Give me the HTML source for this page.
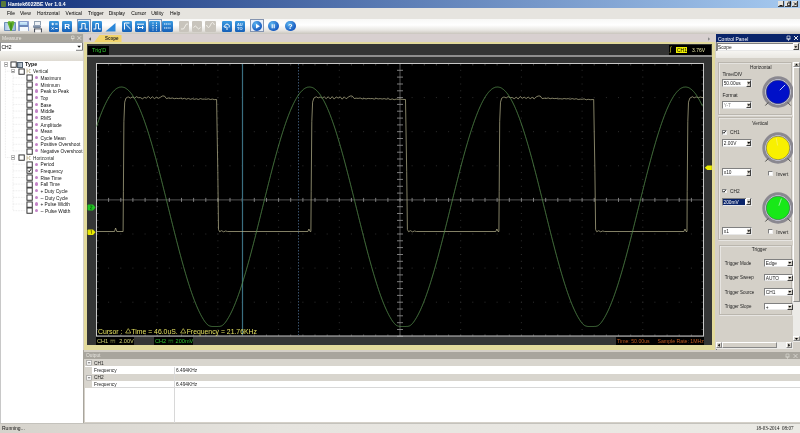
<!DOCTYPE html>
<html><head><meta charset="utf-8">
<style>
*{box-sizing:border-box;margin:0;padding:0}
html,body{width:800px;height:433px;overflow:hidden;background:#d4d0c8;font-family:"Liberation Sans",sans-serif;}
.a{position:absolute}
.t{position:absolute;white-space:nowrap;font-size:5px;line-height:6px;color:#000}
</style></head><body>
<div class="a" style="left:0;top:0;width:800px;height:433px;overflow:hidden;will-change:transform;filter:blur(0.3px)">

<!-- TITLE BAR -->
<div class="a" style="left:0;top:0;width:800px;height:8px;background:linear-gradient(to right,#12307a 0%,#a6caf0 100%)"></div>
<div class="a" style="left:1px;top:1px;width:5px;height:6px;background:#5a7a3a;border-radius:1px"></div>
<div class="t" style="left:8px;top:1px;font-size:5.1px;line-height:6px;font-weight:bold;color:#fff">Hantek6022BE Ver 1.0.4</div>
<div class="a" style="left:778px;top:1px;width:6px;height:6.2px;background:#e4e2dc;border-right:0.6px solid #404040;border-bottom:0.6px solid #404040"></div>
<div class="a" style="left:785px;top:1px;width:6px;height:6.2px;background:#e4e2dc;border-right:0.6px solid #404040;border-bottom:0.6px solid #404040"></div>
<div class="a" style="left:792px;top:1px;width:6px;height:6.2px;background:#e4e2dc;border-right:0.6px solid #404040;border-bottom:0.6px solid #404040"></div>
<svg class="a" style="left:777px;top:0" width="23" height="8" viewBox="0 0 23 8"><path d="M2.5,5.5h3" stroke="#000" stroke-width="0.9"/><path d="M10.5,3h2.5v2.5h-2.5zM11.2,2h2.5v2.5" stroke="#000" stroke-width="0.7" fill="none"/><path d="M17,2.5l3,3M20,2.5l-3,3" stroke="#000" stroke-width="0.9"/></svg>

<!-- MENU BAR -->
<div class="a" style="left:0;top:8px;width:800px;height:11px;background:#e6e4df"></div>
<div class="t" style="left:7px;top:10px">File</div>
<div class="t" style="left:20px;top:10px">View</div>
<div class="t" style="left:37px;top:10px">Horizontal</div>
<div class="t" style="left:65.6px;top:10px">Vertical</div>
<div class="t" style="left:88px;top:10px">Trigger</div>
<div class="t" style="left:108.7px;top:10px">Display</div>
<div class="t" style="left:131.2px;top:10px">Cursor</div>
<div class="t" style="left:151.2px;top:10px">Utility</div>
<div class="t" style="left:170px;top:10px">Help</div>

<!-- TOOLBAR -->
<div class="a" style="left:0;top:19px;width:800px;height:14.5px;background:linear-gradient(to bottom,#f8f8f6 0%,#ffffff 40%,#e8e6e2 75%,#c9c5bd 100%)"></div>
<div class="a" style="left:4.1px;top:21.7px;width:12px;height:9.2px;background:linear-gradient(to right,#a8c4e4,#d8e8f8 50%,#90b0d8);border:0.5px solid #7090b8;border-radius:0.8px"></div>
<svg class="a" style="left:4.8px;top:20px" width="12" height="12" viewBox="0 0 12 12"><path d="M3.8,1 L6,1.5 L8.2,1 L9.6,2.5 L6.6,11 L5.4,11 L2.4,2.5 Z" fill="#62b02a"/><path d="M5.2,3 L6,10 L6.8,3" stroke="#2e7a10" stroke-width="0.6" fill="none"/></svg>
<div class="a" style="left:18.3px;top:21.3px;width:10.5px;height:10px;background:#8aa0d0;border-radius:0.8px"></div>
<div class="a" style="left:19.5px;top:22px;width:7.5px;height:3.2px;background:linear-gradient(to bottom,#d8f0fc,#a8d0f0)"></div>
<div class="a" style="left:19.2px;top:25.3px;width:8.8px;height:1.8px;background:#6a86b8"></div>
<div class="a" style="left:19.8px;top:27.4px;width:7.8px;height:3.3px;background:#f4f8fc"></div>
<div class="a" style="left:33.8px;top:21.3px;width:6.8px;height:3.6px;background:#eef2f6;border:0.6px solid #90a0b0;border-bottom:none"></div>
<div class="a" style="left:33px;top:24.6px;width:8.4px;height:3.6px;background:linear-gradient(to bottom,#9aaac0,#6a7a90);border-radius:1.2px"></div>
<svg class="a" style="left:32.5px;top:27.5px" width="10" height="5" viewBox="0 0 10 5"><path d="M1.6,0.5 V4.3 M8.4,0.5 V4.3 M1.6,1h6.8" stroke="#283040" stroke-width="0.9" fill="none"/><rect x="2.3" y="1.6" width="5.4" height="2.6" fill="#f8f8f8"/></svg>
<div class="a" style="left:48.8px;top:21px;width:10.2px;height:10.5px;border-radius:1.2px;background:linear-gradient(to bottom,#3a9ae0,#1660b8)"></div>
<svg class="a" style="left:48.8px;top:21px" width="10.2" height="10.5" viewBox="0 0 10.2 10.5"><path d="M2.5,3h2.5M3.75,1.8v2.5M6.2,3h2.5M2.7,6.5l2,2M4.7,6.5l-2,2M6.2,7.5h2.5" stroke="#fff" stroke-width="1" fill="none" stroke-width="0.9"/></svg>
<div class="a" style="left:62px;top:21px;width:10.2px;height:10.5px;border-radius:1.2px;background:linear-gradient(to bottom,#3a9ae0,#1660b8)"></div>
<svg class="a" style="left:62px;top:21px" width="10.2" height="10.5" viewBox="0 0 10.2 10.5"><text x="5.1" y="8.3" font-size="8" font-weight="bold" fill="#fff" text-anchor="middle" font-family="Liberation Sans">R</text></svg>
<div class="a" style="left:76.5px;top:19.3px;width:14.0px;height:13.0px;border:0.8px solid #8494b0;background:rgba(225,235,250,0.7)"></div>
<div class="a" style="left:78px;top:21px;width:11.0px;height:10.5px;border-radius:1.2px;background:linear-gradient(to bottom,#3a9ae0,#1660b8)"></div>
<svg class="a" style="left:78px;top:21px" width="11.0" height="10.5" viewBox="0 0 11.0 10.5"><path d="M1.5,8H3.8V2.5H7.2V8H9.5" stroke="#fff" stroke-width="1" fill="none"/></svg>
<div class="a" style="left:92px;top:21px;width:10.3px;height:10.5px;border-radius:1.2px;background:linear-gradient(to bottom,#3a9ae0,#1660b8)"></div>
<svg class="a" style="left:92px;top:21px" width="10.3" height="10.5" viewBox="0 0 10.3 10.5"><path d="M1.5,8H3.8V2.5H6.5V8H8.8" stroke="#fff" stroke-width="1" fill="none" stroke-width="0.8"/></svg>
<svg class="a" style="left:105px;top:21px" width="11" height="11" viewBox="0 0 11 11"><path d="M0.5,10.5 L10.5,2 V10.5 Z" fill="#2a86d8"/></svg>
<div class="a" style="left:122.4px;top:21px;width:10.1px;height:10.5px;border-radius:1.2px;background:linear-gradient(to bottom,#3a9ae0,#1660b8)"></div>
<svg class="a" style="left:122.4px;top:21px" width="10.1" height="10.5" viewBox="0 0 10.1 10.5"><path d="M2.5,2v6.5M2.5,2h5M4,3.5l4.5,4.5" stroke="#fff" stroke-width="1" fill="none"/></svg>
<div class="a" style="left:134.8px;top:21px;width:11.2px;height:10.5px;border-radius:1.2px;background:linear-gradient(to bottom,#3a9ae0,#1660b8)"></div>
<svg class="a" style="left:134.8px;top:21px" width="11.2" height="10.5" viewBox="0 0 11.2 10.5"><path d="M2,3.2h7M2.5,6.5h6M3.5,5v3M7.5,5v3" stroke="#fff" stroke-width="1" fill="none" stroke-width="0.8"/></svg>
<div class="a" style="left:147.5px;top:19.3px;width:14.0px;height:13.0px;border:0.8px solid #8494b0;background:rgba(225,235,250,0.7)"></div>
<div class="a" style="left:148.8px;top:21px;width:11.7px;height:10.5px;border-radius:1.2px;background:linear-gradient(to bottom,#3a9ae0,#1660b8)"></div>
<svg class="a" style="left:148.8px;top:21px" width="11.7" height="10.5" viewBox="0 0 11.7 10.5"><path d="M4,1.5v8M7.5,1.5v8" stroke="#fff" stroke-width="1" fill="none" stroke-dasharray="1.2,1.2"/></svg>
<div class="a" style="left:161.8px;top:21px;width:11.2px;height:10.5px;border-radius:1.2px;background:linear-gradient(to bottom,#3a9ae0,#1660b8)"></div>
<svg class="a" style="left:161.8px;top:21px" width="11.2" height="10.5" viewBox="0 0 11.2 10.5"><path d="M2,3h7M2,7h7" stroke="#fff" stroke-width="1" fill="none" stroke-dasharray="1.2,0.6"/></svg>
<div class="a" style="left:178.7px;top:21px;width:10.1px;height:10.5px;border-radius:1px;background:#c8c4bc"></div>
<svg class="a" style="left:178.7px;top:21px" width="10.1" height="10.5" viewBox="0 0 10.1 10.5"><path d="M2,8h2.5l3,-5h1.5" stroke="#f0eee8" stroke-width="1" fill="none"/></svg>
<div class="a" style="left:192.2px;top:21px;width:10.1px;height:10.5px;border-radius:1px;background:#c8c4bc"></div>
<svg class="a" style="left:192.2px;top:21px" width="10.1" height="10.5" viewBox="0 0 10.1 10.5"><path d="M1.5,6.5 q2,-3 3.5,0 t3.5,0" stroke="#f0eee8" stroke-width="1" fill="none"/></svg>
<div class="a" style="left:204.6px;top:21px;width:11.3px;height:10.5px;border-radius:1px;background:#c8c4bc"></div>
<svg class="a" style="left:204.6px;top:21px" width="11.3" height="10.5" viewBox="0 0 11.3 10.5"><path d="M1.5,4 q2,5 4,0 t4,0" stroke="#f0eee8" stroke-width="1" fill="none"/></svg>
<div class="a" style="left:221.9px;top:21px;width:10.1px;height:10.5px;border-radius:1.2px;background:linear-gradient(to bottom,#3a9ae0,#1660b8)"></div>
<svg class="a" style="left:221.9px;top:21px" width="10.1" height="10.5" viewBox="0 0 10.1 10.5"><path d="M3,6.5 a2.3,2.3 0 1 1 4,0 M3,6.5 l-1.2,-1.2 M3,6.5 l1.4,-0.9M5,6v3" stroke="#fff" stroke-width="1" fill="none" stroke-width="1.1"/></svg>
<div class="a" style="left:235.2px;top:21px;width:9.6px;height:10.5px;border-radius:1.2px;background:linear-gradient(to bottom,#3a9ae0,#1660b8)"></div>
<svg class="a" style="left:235.2px;top:21px" width="9.6" height="10.5" viewBox="0 0 9.6 10.5"><text x="4.8" y="4.6" font-size="4" fill="#dfefff" text-anchor="middle" font-family="Liberation Sans" font-weight="bold">AU</text><text x="4.8" y="8.8" font-size="4" fill="#dfefff" text-anchor="middle" font-family="Liberation Sans" font-weight="bold">TO</text></svg>
<div class="a" style="left:250px;top:19.3px;width:14.0px;height:13.0px;border:0.8px solid #8494b0;background:rgba(225,235,250,0.7)"></div>
<div class="a" style="left:251.8px;top:20.8px;width:10.4px;height:10.4px;border-radius:50%;background:radial-gradient(circle at 35% 30%,#5ab4f0,#1a5cc0 70%)"></div>
<svg class="a" style="left:251.8px;top:20.8px" width="10.4" height="10.4" viewBox="0 0 10.4 10.4"><path d="M4,2.8 L8,5.2 L4,7.6 Z" fill="#fff"/></svg>
<div class="a" style="left:268.2px;top:20.8px;width:10.4px;height:10.4px;border-radius:50%;background:radial-gradient(circle at 35% 30%,#5ab4f0,#1a5cc0 70%)"></div>
<svg class="a" style="left:268.2px;top:20.8px" width="10.4" height="10.4" viewBox="0 0 10.4 10.4"><path d="M4.2,3.2v4M6.2,3.2v4" stroke="#fff" stroke-width="1.1"/></svg>
<div class="a" style="left:285.3px;top:20.8px;width:10.4px;height:10.4px;border-radius:50%;background:radial-gradient(circle at 35% 30%,#5ab4f0,#1a5cc0 70%)"></div>
<svg class="a" style="left:285.3px;top:20.8px" width="10.4" height="10.4" viewBox="0 0 10.4 10.4"><text x="5.2" y="8" font-size="7.5" font-weight="bold" fill="#fff" text-anchor="middle" font-family="Liberation Sans">?</text></svg>

<!-- LEFT PANEL (Measure) -->
<div class="a" style="left:0;top:33.5px;width:84px;height:389px;background:#d4d0c8"></div>
<div class="a" style="left:0;top:34px;width:83px;height:8px;background:#a8a59d"></div>
<div class="t" style="left:2px;top:35px;color:#e8e6e0">Measure</div>
<svg class="a" style="left:69px;top:35px" width="14" height="6" viewBox="0 0 14 6"><path d="M2.5,1h2.5v2.5h-2.5zM2,3.5h3.5M3.75,3.5v2" stroke="#e4e2dc" stroke-width="0.6" fill="none"/><path d="M8.5,1.2l3.6,3.6M12.1,1.2l-3.6,3.6" stroke="#e4e2dc" stroke-width="0.8"/></svg>
<div class="a" style="left:0;top:42px;width:83px;height:8.5px;background:#fff;border-left:0.6px solid #909090;border-top:0.6px solid #a0a0a0"></div>
<div class="t" style="left:1.5px;top:43.8px;font-size:5px">CH2</div>
<svg class="a" style="left:76px;top:42.5px" width="7" height="8" viewBox="0 0 7 8"><path d="M1.3,2.8h3.6l-1.8,2z" fill="#111"/><path d="M0,7.3h6.5V0" stroke="#404040" stroke-width="0.7" fill="none"/></svg>
<div class="a" style="left:0;top:50.5px;width:83px;height:10px;background:linear-gradient(to bottom,#f4f3ef,#dedad2)"></div>
<div class="a" style="left:0;top:60.5px;width:83px;height:362px;background:#fff;border-left:1px solid #c8c8c8"></div>
<svg class="a" style="left:0;top:0" width="84" height="230" viewBox="0 0 84 230"><path d="M5.4,71.24h5M13,77.88h12M13,84.52h12M13,91.16h12M13,97.80h12M13,104.44h12M13,111.08h12M13,117.72h12M13,124.36h12M13,131.00h12M13,137.64h12M13,144.28h12M13,150.92h12M5.4,157.56h5M13,164.20h12M13,170.84h12M13,177.48h12M13,184.12h12M13,190.76h12M13,197.40h12M13,204.04h12M13,210.68h12M5.4,67.60V157.56M13,73.24V150.92M13,159.56V210.68" stroke="#dcdcdc" stroke-width="0.6" stroke-dasharray="0.8,0.8" fill="none"/></svg>
<div class="a" style="left:3.5px;top:62.40px;width:4.2px;height:4.2px;background:#fff;border:0.6px solid #bcbcbc"></div>
<div class="a" style="left:4.5px;top:64.30px;width:2.2px;height:0.6px;background:#8a8a8a"></div>
<svg class="a" style="left:9.50px;top:61.20px" width="7" height="7" viewBox="-0.5 -0.5 7 7"><rect x="0.45" y="0.45" width="5.3" height="5.3" fill="#fff" stroke="#2a2a2a" stroke-width="0.95"/></svg>
<div class="a" style="left:17px;top:61.60px;width:5.5px;height:6px;background:linear-gradient(to right,#8898a8,#c8d0d8);border:0.4px solid #506070"></div>
<div class="t" style="left:25px;top:61.40px;font-weight:bold;font-size:5.4px;color:#111">Type</div>
<div class="a" style="left:10.8px;top:69.04px;width:4.2px;height:4.2px;background:#fff;border:0.6px solid #bcbcbc"></div>
<div class="a" style="left:11.8px;top:70.94px;width:2.2px;height:0.6px;background:#8a8a8a"></div>
<svg class="a" style="left:17.50px;top:67.84px" width="7" height="7" viewBox="-0.5 -0.5 7 7"><rect x="0.45" y="0.45" width="5.3" height="5.3" fill="#fff" stroke="#2a2a2a" stroke-width="0.95"/></svg>
<svg class="a" style="left:25.5px;top:68.24px" width="5" height="6" viewBox="0 0 5 6"><path d="M1,0.5v5M1,3h3M3,1.5h1.5M3,4.5h1.5" stroke="#b0a070" stroke-width="0.7" fill="none"/></svg>
<div class="t" style="left:33px;top:69.44px;color:#2c302c;font-size:4.7px">Vertical</div>
<svg class="a" style="left:25.50px;top:74.48px" width="7" height="7" viewBox="-0.5 -0.5 7 7"><rect x="0.45" y="0.45" width="5.3" height="5.3" fill="#fff" stroke="#2a2a2a" stroke-width="0.95"/></svg>
<div class="a" style="left:35.2px;top:76.18px;width:3px;height:3.2px;border-radius:50%;background:#c484c8"></div>
<div class="t" style="left:40.5px;top:76.08px;color:#141414;font-size:4.75px">Maximum</div>
<svg class="a" style="left:25.50px;top:81.12px" width="7" height="7" viewBox="-0.5 -0.5 7 7"><rect x="0.45" y="0.45" width="5.3" height="5.3" fill="#fff" stroke="#2a2a2a" stroke-width="0.95"/></svg>
<div class="a" style="left:35.2px;top:82.82px;width:3px;height:3.2px;border-radius:50%;background:#c484c8"></div>
<div class="t" style="left:40.5px;top:82.72px;color:#141414;font-size:4.75px">Minimum</div>
<svg class="a" style="left:25.50px;top:87.76px" width="7" height="7" viewBox="-0.5 -0.5 7 7"><rect x="0.45" y="0.45" width="5.3" height="5.3" fill="#fff" stroke="#2a2a2a" stroke-width="0.95"/></svg>
<div class="a" style="left:35.2px;top:89.46px;width:3px;height:3.2px;border-radius:50%;background:#c484c8"></div>
<div class="t" style="left:40.5px;top:89.36px;color:#141414;font-size:4.75px">Peak to Peak</div>
<svg class="a" style="left:25.50px;top:94.40px" width="7" height="7" viewBox="-0.5 -0.5 7 7"><rect x="0.45" y="0.45" width="5.3" height="5.3" fill="#fff" stroke="#2a2a2a" stroke-width="0.95"/></svg>
<div class="a" style="left:35.2px;top:96.10px;width:3px;height:3.2px;border-radius:50%;background:#c484c8"></div>
<div class="t" style="left:40.5px;top:96.00px;color:#141414;font-size:4.75px">Top</div>
<svg class="a" style="left:25.50px;top:101.04px" width="7" height="7" viewBox="-0.5 -0.5 7 7"><rect x="0.45" y="0.45" width="5.3" height="5.3" fill="#fff" stroke="#2a2a2a" stroke-width="0.95"/></svg>
<div class="a" style="left:35.2px;top:102.74px;width:3px;height:3.2px;border-radius:50%;background:#c484c8"></div>
<div class="t" style="left:40.5px;top:102.64px;color:#141414;font-size:4.75px">Base</div>
<svg class="a" style="left:25.50px;top:107.68px" width="7" height="7" viewBox="-0.5 -0.5 7 7"><rect x="0.45" y="0.45" width="5.3" height="5.3" fill="#fff" stroke="#2a2a2a" stroke-width="0.95"/></svg>
<div class="a" style="left:35.2px;top:109.38px;width:3px;height:3.2px;border-radius:50%;background:#c484c8"></div>
<div class="t" style="left:40.5px;top:109.28px;color:#141414;font-size:4.75px">Middle</div>
<svg class="a" style="left:25.50px;top:114.32px" width="7" height="7" viewBox="-0.5 -0.5 7 7"><rect x="0.45" y="0.45" width="5.3" height="5.3" fill="#fff" stroke="#2a2a2a" stroke-width="0.95"/></svg>
<div class="a" style="left:35.2px;top:116.02px;width:3px;height:3.2px;border-radius:50%;background:#c484c8"></div>
<div class="t" style="left:40.5px;top:115.92px;color:#141414;font-size:4.75px">RMS</div>
<svg class="a" style="left:25.50px;top:120.96px" width="7" height="7" viewBox="-0.5 -0.5 7 7"><rect x="0.45" y="0.45" width="5.3" height="5.3" fill="#fff" stroke="#2a2a2a" stroke-width="0.95"/></svg>
<div class="a" style="left:35.2px;top:122.66px;width:3px;height:3.2px;border-radius:50%;background:#c484c8"></div>
<div class="t" style="left:40.5px;top:122.56px;color:#141414;font-size:4.75px">Amplitude</div>
<svg class="a" style="left:25.50px;top:127.60px" width="7" height="7" viewBox="-0.5 -0.5 7 7"><rect x="0.45" y="0.45" width="5.3" height="5.3" fill="#fff" stroke="#2a2a2a" stroke-width="0.95"/></svg>
<div class="a" style="left:35.2px;top:129.30px;width:3px;height:3.2px;border-radius:50%;background:#c484c8"></div>
<div class="t" style="left:40.5px;top:129.20px;color:#141414;font-size:4.75px">Mean</div>
<svg class="a" style="left:25.50px;top:134.24px" width="7" height="7" viewBox="-0.5 -0.5 7 7"><rect x="0.45" y="0.45" width="5.3" height="5.3" fill="#fff" stroke="#2a2a2a" stroke-width="0.95"/></svg>
<div class="a" style="left:35.2px;top:135.94px;width:3px;height:3.2px;border-radius:50%;background:#c484c8"></div>
<div class="t" style="left:40.5px;top:135.84px;color:#141414;font-size:4.75px">Cycle Mean</div>
<svg class="a" style="left:25.50px;top:140.88px" width="7" height="7" viewBox="-0.5 -0.5 7 7"><rect x="0.45" y="0.45" width="5.3" height="5.3" fill="#fff" stroke="#2a2a2a" stroke-width="0.95"/></svg>
<div class="a" style="left:35.2px;top:142.58px;width:3px;height:3.2px;border-radius:50%;background:#c484c8"></div>
<div class="t" style="left:40.5px;top:142.48px;color:#141414;font-size:4.75px">Positive Overshoot</div>
<svg class="a" style="left:25.50px;top:147.52px" width="7" height="7" viewBox="-0.5 -0.5 7 7"><rect x="0.45" y="0.45" width="5.3" height="5.3" fill="#fff" stroke="#2a2a2a" stroke-width="0.95"/></svg>
<div class="a" style="left:35.2px;top:149.22px;width:3px;height:3.2px;border-radius:50%;background:#c484c8"></div>
<div class="t" style="left:40.5px;top:149.12px;color:#141414;font-size:4.75px">Negative Overshoot</div>
<div class="a" style="left:10.8px;top:155.36px;width:4.2px;height:4.2px;background:#fff;border:0.6px solid #bcbcbc"></div>
<div class="a" style="left:11.8px;top:157.26px;width:2.2px;height:0.6px;background:#8a8a8a"></div>
<svg class="a" style="left:17.50px;top:154.16px" width="7" height="7" viewBox="-0.5 -0.5 7 7"><rect x="0.45" y="0.45" width="5.3" height="5.3" fill="#fff" stroke="#2a2a2a" stroke-width="0.95"/></svg>
<svg class="a" style="left:25.5px;top:154.56px" width="5" height="6" viewBox="0 0 5 6"><path d="M1,0.5v5M1,3h3M3,1.5h1.5M3,4.5h1.5" stroke="#b0a070" stroke-width="0.7" fill="none"/></svg>
<div class="t" style="left:33px;top:155.76px;color:#2c302c;font-size:4.7px">Horizontal</div>
<svg class="a" style="left:25.50px;top:160.80px" width="7" height="7" viewBox="-0.5 -0.5 7 7"><rect x="0.45" y="0.45" width="5.3" height="5.3" fill="#fff" stroke="#2a2a2a" stroke-width="0.95"/></svg>
<div class="a" style="left:35.2px;top:162.50px;width:3px;height:3.2px;border-radius:50%;background:#c484c8"></div>
<div class="t" style="left:40.5px;top:162.40px;color:#141414;font-size:4.75px">Period</div>
<svg class="a" style="left:25.50px;top:167.44px" width="7" height="7" viewBox="-0.5 -0.5 7 7"><rect x="0.45" y="0.45" width="5.3" height="5.3" fill="#fff" stroke="#2a2a2a" stroke-width="0.95"/><path d="M1.6,3 l1.1,1.3 l1.9,-2.6" stroke="#111" stroke-width="1" fill="none"/></svg>
<div class="a" style="left:35.2px;top:169.14px;width:3px;height:3.2px;border-radius:50%;background:#c484c8"></div>
<div class="t" style="left:40.5px;top:169.04px;color:#141414;font-size:4.75px">Frequency</div>
<svg class="a" style="left:25.50px;top:174.08px" width="7" height="7" viewBox="-0.5 -0.5 7 7"><rect x="0.45" y="0.45" width="5.3" height="5.3" fill="#fff" stroke="#2a2a2a" stroke-width="0.95"/></svg>
<div class="a" style="left:35.2px;top:175.78px;width:3px;height:3.2px;border-radius:50%;background:#c484c8"></div>
<div class="t" style="left:40.5px;top:175.68px;color:#141414;font-size:4.75px">Rise Time</div>
<svg class="a" style="left:25.50px;top:180.72px" width="7" height="7" viewBox="-0.5 -0.5 7 7"><rect x="0.45" y="0.45" width="5.3" height="5.3" fill="#fff" stroke="#2a2a2a" stroke-width="0.95"/></svg>
<div class="a" style="left:35.2px;top:182.42px;width:3px;height:3.2px;border-radius:50%;background:#c484c8"></div>
<div class="t" style="left:40.5px;top:182.32px;color:#141414;font-size:4.75px">Fall Time</div>
<svg class="a" style="left:25.50px;top:187.36px" width="7" height="7" viewBox="-0.5 -0.5 7 7"><rect x="0.45" y="0.45" width="5.3" height="5.3" fill="#fff" stroke="#2a2a2a" stroke-width="0.95"/></svg>
<div class="a" style="left:35.2px;top:189.06px;width:3px;height:3.2px;border-radius:50%;background:#c484c8"></div>
<div class="t" style="left:40.5px;top:188.96px;color:#141414;font-size:4.75px">+ Duty Cycle</div>
<svg class="a" style="left:25.50px;top:194.00px" width="7" height="7" viewBox="-0.5 -0.5 7 7"><rect x="0.45" y="0.45" width="5.3" height="5.3" fill="#fff" stroke="#2a2a2a" stroke-width="0.95"/></svg>
<div class="a" style="left:35.2px;top:195.70px;width:3px;height:3.2px;border-radius:50%;background:#c484c8"></div>
<div class="t" style="left:40.5px;top:195.60px;color:#141414;font-size:4.75px">-- Duty Cycle</div>
<svg class="a" style="left:25.50px;top:200.64px" width="7" height="7" viewBox="-0.5 -0.5 7 7"><rect x="0.45" y="0.45" width="5.3" height="5.3" fill="#fff" stroke="#2a2a2a" stroke-width="0.95"/></svg>
<div class="a" style="left:35.2px;top:202.34px;width:3px;height:3.2px;border-radius:50%;background:#c484c8"></div>
<div class="t" style="left:40.5px;top:202.24px;color:#141414;font-size:4.75px">+ Pulse Width</div>
<svg class="a" style="left:25.50px;top:207.28px" width="7" height="7" viewBox="-0.5 -0.5 7 7"><rect x="0.45" y="0.45" width="5.3" height="5.3" fill="#fff" stroke="#2a2a2a" stroke-width="0.95"/></svg>
<div class="a" style="left:35.2px;top:208.98px;width:3px;height:3.2px;border-radius:50%;background:#c484c8"></div>
<div class="t" style="left:40.5px;top:208.88px;color:#141414;font-size:4.75px">-- Pulse Width</div>

<!-- SCOPE TAB AREA -->
<div class="a" style="left:84px;top:33.5px;width:632px;height:9px;background:#d8d0d0"></div>
<svg class="a" style="left:87.5px;top:35.5px" width="4" height="6" viewBox="0 0 4 6"><path d="M3,1.2 L0.8,3 L3,4.8 Z" fill="#555"/></svg>
<div class="a" style="left:93.5px;top:35px;width:28px;height:8px;background:#f2d46a;clip-path:polygon(6px 0,100% 0,100% 100%,0 100%)"></div>
<div class="t" style="left:105px;top:35.8px;font-weight:bold;color:#222;font-size:4.5px">Scope</div>
<svg class="a" style="left:706.5px;top:35.5px" width="4" height="6" viewBox="0 0 4 6"><path d="M1,1.2 L3.2,3 L1,4.8 Z" fill="#888"/></svg>
<div class="a" style="left:84px;top:42px;width:631px;height:307.5px;background:#e2da9c"></div>
<div class="a" style="left:87px;top:44px;width:625px;height:301.3px;background:#343535"></div>
<div class="a" style="left:88px;top:45.5px;width:21px;height:9px;background:#000"></div>
<div class="t" style="left:92px;top:47px;color:#3c3;font-size:5.5px">Trig'D</div>
<div class="a" style="left:668.5px;top:45px;width:42.5px;height:9.5px;background:#000"></div>
<div class="t" style="left:670px;top:46px;color:#dd3;font-size:6px">&#x222B;</div>
<div class="a" style="left:676px;top:47px;width:11px;height:5.5px;background:#f0f000"></div>
<div class="t" style="left:677px;top:46.8px;color:#000;font-size:5px">CH1</div>
<div class="t" style="left:692px;top:47px;color:#e0e0a0;font-size:5px">3.76V</div>
<div class="a" style="left:87px;top:55px;width:625px;height:1.6px;background:#8f8f8f"></div>

<!-- PLOT -->
<svg class="a" style="left:0;top:0" width="800" height="433" viewBox="0 0 800 433">
<rect x="96" y="63" width="608" height="273" fill="#000"/>
<path d="M156.7,63.5h1M156.7,70.3h1M156.7,77.1h1M156.7,84.0h1M156.7,90.8h1M156.7,97.6h1M156.7,104.4h1M156.7,111.2h1M156.7,118.1h1M156.7,124.9h1M156.7,131.7h1M156.7,138.5h1M156.7,145.3h1M156.7,152.2h1M156.7,159.0h1M156.7,165.8h1M156.7,172.6h1M156.7,179.4h1M156.7,186.3h1M156.7,193.1h1M156.7,199.9h1M156.7,206.7h1M156.7,213.5h1M156.7,220.4h1M156.7,227.2h1M156.7,234.0h1M156.7,240.8h1M156.7,247.6h1M156.7,254.5h1M156.7,261.3h1M156.7,268.1h1M156.7,274.9h1M156.7,281.7h1M156.7,288.6h1M156.7,295.4h1M156.7,302.2h1M156.7,309.0h1M156.7,315.8h1M156.7,322.7h1M156.7,329.5h1M156.7,336.3h1M217.4,63.5h1M217.4,70.3h1M217.4,77.1h1M217.4,84.0h1M217.4,90.8h1M217.4,97.6h1M217.4,104.4h1M217.4,111.2h1M217.4,118.1h1M217.4,124.9h1M217.4,131.7h1M217.4,138.5h1M217.4,145.3h1M217.4,152.2h1M217.4,159.0h1M217.4,165.8h1M217.4,172.6h1M217.4,179.4h1M217.4,186.3h1M217.4,193.1h1M217.4,199.9h1M217.4,206.7h1M217.4,213.5h1M217.4,220.4h1M217.4,227.2h1M217.4,234.0h1M217.4,240.8h1M217.4,247.6h1M217.4,254.5h1M217.4,261.3h1M217.4,268.1h1M217.4,274.9h1M217.4,281.7h1M217.4,288.6h1M217.4,295.4h1M217.4,302.2h1M217.4,309.0h1M217.4,315.8h1M217.4,322.7h1M217.4,329.5h1M217.4,336.3h1M278.1,63.5h1M278.1,70.3h1M278.1,77.1h1M278.1,84.0h1M278.1,90.8h1M278.1,97.6h1M278.1,104.4h1M278.1,111.2h1M278.1,118.1h1M278.1,124.9h1M278.1,131.7h1M278.1,138.5h1M278.1,145.3h1M278.1,152.2h1M278.1,159.0h1M278.1,165.8h1M278.1,172.6h1M278.1,179.4h1M278.1,186.3h1M278.1,193.1h1M278.1,199.9h1M278.1,206.7h1M278.1,213.5h1M278.1,220.4h1M278.1,227.2h1M278.1,234.0h1M278.1,240.8h1M278.1,247.6h1M278.1,254.5h1M278.1,261.3h1M278.1,268.1h1M278.1,274.9h1M278.1,281.7h1M278.1,288.6h1M278.1,295.4h1M278.1,302.2h1M278.1,309.0h1M278.1,315.8h1M278.1,322.7h1M278.1,329.5h1M278.1,336.3h1M338.8,63.5h1M338.8,70.3h1M338.8,77.1h1M338.8,84.0h1M338.8,90.8h1M338.8,97.6h1M338.8,104.4h1M338.8,111.2h1M338.8,118.1h1M338.8,124.9h1M338.8,131.7h1M338.8,138.5h1M338.8,145.3h1M338.8,152.2h1M338.8,159.0h1M338.8,165.8h1M338.8,172.6h1M338.8,179.4h1M338.8,186.3h1M338.8,193.1h1M338.8,199.9h1M338.8,206.7h1M338.8,213.5h1M338.8,220.4h1M338.8,227.2h1M338.8,234.0h1M338.8,240.8h1M338.8,247.6h1M338.8,254.5h1M338.8,261.3h1M338.8,268.1h1M338.8,274.9h1M338.8,281.7h1M338.8,288.6h1M338.8,295.4h1M338.8,302.2h1M338.8,309.0h1M338.8,315.8h1M338.8,322.7h1M338.8,329.5h1M338.8,336.3h1M460.2,63.5h1M460.2,70.3h1M460.2,77.1h1M460.2,84.0h1M460.2,90.8h1M460.2,97.6h1M460.2,104.4h1M460.2,111.2h1M460.2,118.1h1M460.2,124.9h1M460.2,131.7h1M460.2,138.5h1M460.2,145.3h1M460.2,152.2h1M460.2,159.0h1M460.2,165.8h1M460.2,172.6h1M460.2,179.4h1M460.2,186.3h1M460.2,193.1h1M460.2,199.9h1M460.2,206.7h1M460.2,213.5h1M460.2,220.4h1M460.2,227.2h1M460.2,234.0h1M460.2,240.8h1M460.2,247.6h1M460.2,254.5h1M460.2,261.3h1M460.2,268.1h1M460.2,274.9h1M460.2,281.7h1M460.2,288.6h1M460.2,295.4h1M460.2,302.2h1M460.2,309.0h1M460.2,315.8h1M460.2,322.7h1M460.2,329.5h1M460.2,336.3h1M520.9,63.5h1M520.9,70.3h1M520.9,77.1h1M520.9,84.0h1M520.9,90.8h1M520.9,97.6h1M520.9,104.4h1M520.9,111.2h1M520.9,118.1h1M520.9,124.9h1M520.9,131.7h1M520.9,138.5h1M520.9,145.3h1M520.9,152.2h1M520.9,159.0h1M520.9,165.8h1M520.9,172.6h1M520.9,179.4h1M520.9,186.3h1M520.9,193.1h1M520.9,199.9h1M520.9,206.7h1M520.9,213.5h1M520.9,220.4h1M520.9,227.2h1M520.9,234.0h1M520.9,240.8h1M520.9,247.6h1M520.9,254.5h1M520.9,261.3h1M520.9,268.1h1M520.9,274.9h1M520.9,281.7h1M520.9,288.6h1M520.9,295.4h1M520.9,302.2h1M520.9,309.0h1M520.9,315.8h1M520.9,322.7h1M520.9,329.5h1M520.9,336.3h1M581.6,63.5h1M581.6,70.3h1M581.6,77.1h1M581.6,84.0h1M581.6,90.8h1M581.6,97.6h1M581.6,104.4h1M581.6,111.2h1M581.6,118.1h1M581.6,124.9h1M581.6,131.7h1M581.6,138.5h1M581.6,145.3h1M581.6,152.2h1M581.6,159.0h1M581.6,165.8h1M581.6,172.6h1M581.6,179.4h1M581.6,186.3h1M581.6,193.1h1M581.6,199.9h1M581.6,206.7h1M581.6,213.5h1M581.6,220.4h1M581.6,227.2h1M581.6,234.0h1M581.6,240.8h1M581.6,247.6h1M581.6,254.5h1M581.6,261.3h1M581.6,268.1h1M581.6,274.9h1M581.6,281.7h1M581.6,288.6h1M581.6,295.4h1M581.6,302.2h1M581.6,309.0h1M581.6,315.8h1M581.6,322.7h1M581.6,329.5h1M581.6,336.3h1M642.3,63.5h1M642.3,70.3h1M642.3,77.1h1M642.3,84.0h1M642.3,90.8h1M642.3,97.6h1M642.3,104.4h1M642.3,111.2h1M642.3,118.1h1M642.3,124.9h1M642.3,131.7h1M642.3,138.5h1M642.3,145.3h1M642.3,152.2h1M642.3,159.0h1M642.3,165.8h1M642.3,172.6h1M642.3,179.4h1M642.3,186.3h1M642.3,193.1h1M642.3,199.9h1M642.3,206.7h1M642.3,213.5h1M642.3,220.4h1M642.3,227.2h1M642.3,234.0h1M642.3,240.8h1M642.3,247.6h1M642.3,254.5h1M642.3,261.3h1M642.3,268.1h1M642.3,274.9h1M642.3,281.7h1M642.3,288.6h1M642.3,295.4h1M642.3,302.2h1M642.3,309.0h1M642.3,315.8h1M642.3,322.7h1M642.3,329.5h1M642.3,336.3h1M96.0,97.6h1M108.1,97.6h1M120.3,97.6h1M132.4,97.6h1M144.6,97.6h1M156.7,97.6h1M168.8,97.6h1M181.0,97.6h1M193.1,97.6h1M205.3,97.6h1M217.4,97.6h1M229.5,97.6h1M241.7,97.6h1M253.8,97.6h1M266.0,97.6h1M278.1,97.6h1M290.2,97.6h1M302.4,97.6h1M314.5,97.6h1M326.7,97.6h1M338.8,97.6h1M350.9,97.6h1M363.1,97.6h1M375.2,97.6h1M387.4,97.6h1M399.5,97.6h1M411.6,97.6h1M423.8,97.6h1M435.9,97.6h1M448.1,97.6h1M460.2,97.6h1M472.3,97.6h1M484.5,97.6h1M496.6,97.6h1M508.8,97.6h1M520.9,97.6h1M533.0,97.6h1M545.2,97.6h1M557.3,97.6h1M569.5,97.6h1M581.6,97.6h1M593.7,97.6h1M605.9,97.6h1M618.0,97.6h1M630.2,97.6h1M642.3,97.6h1M654.4,97.6h1M666.6,97.6h1M678.7,97.6h1M690.9,97.6h1M703.0,97.6h1M96.0,131.7h1M108.1,131.7h1M120.3,131.7h1M132.4,131.7h1M144.6,131.7h1M156.7,131.7h1M168.8,131.7h1M181.0,131.7h1M193.1,131.7h1M205.3,131.7h1M217.4,131.7h1M229.5,131.7h1M241.7,131.7h1M253.8,131.7h1M266.0,131.7h1M278.1,131.7h1M290.2,131.7h1M302.4,131.7h1M314.5,131.7h1M326.7,131.7h1M338.8,131.7h1M350.9,131.7h1M363.1,131.7h1M375.2,131.7h1M387.4,131.7h1M399.5,131.7h1M411.6,131.7h1M423.8,131.7h1M435.9,131.7h1M448.1,131.7h1M460.2,131.7h1M472.3,131.7h1M484.5,131.7h1M496.6,131.7h1M508.8,131.7h1M520.9,131.7h1M533.0,131.7h1M545.2,131.7h1M557.3,131.7h1M569.5,131.7h1M581.6,131.7h1M593.7,131.7h1M605.9,131.7h1M618.0,131.7h1M630.2,131.7h1M642.3,131.7h1M654.4,131.7h1M666.6,131.7h1M678.7,131.7h1M690.9,131.7h1M703.0,131.7h1M96.0,165.8h1M108.1,165.8h1M120.3,165.8h1M132.4,165.8h1M144.6,165.8h1M156.7,165.8h1M168.8,165.8h1M181.0,165.8h1M193.1,165.8h1M205.3,165.8h1M217.4,165.8h1M229.5,165.8h1M241.7,165.8h1M253.8,165.8h1M266.0,165.8h1M278.1,165.8h1M290.2,165.8h1M302.4,165.8h1M314.5,165.8h1M326.7,165.8h1M338.8,165.8h1M350.9,165.8h1M363.1,165.8h1M375.2,165.8h1M387.4,165.8h1M399.5,165.8h1M411.6,165.8h1M423.8,165.8h1M435.9,165.8h1M448.1,165.8h1M460.2,165.8h1M472.3,165.8h1M484.5,165.8h1M496.6,165.8h1M508.8,165.8h1M520.9,165.8h1M533.0,165.8h1M545.2,165.8h1M557.3,165.8h1M569.5,165.8h1M581.6,165.8h1M593.7,165.8h1M605.9,165.8h1M618.0,165.8h1M630.2,165.8h1M642.3,165.8h1M654.4,165.8h1M666.6,165.8h1M678.7,165.8h1M690.9,165.8h1M703.0,165.8h1M96.0,234.0h1M108.1,234.0h1M120.3,234.0h1M132.4,234.0h1M144.6,234.0h1M156.7,234.0h1M168.8,234.0h1M181.0,234.0h1M193.1,234.0h1M205.3,234.0h1M217.4,234.0h1M229.5,234.0h1M241.7,234.0h1M253.8,234.0h1M266.0,234.0h1M278.1,234.0h1M290.2,234.0h1M302.4,234.0h1M314.5,234.0h1M326.7,234.0h1M338.8,234.0h1M350.9,234.0h1M363.1,234.0h1M375.2,234.0h1M387.4,234.0h1M399.5,234.0h1M411.6,234.0h1M423.8,234.0h1M435.9,234.0h1M448.1,234.0h1M460.2,234.0h1M472.3,234.0h1M484.5,234.0h1M496.6,234.0h1M508.8,234.0h1M520.9,234.0h1M533.0,234.0h1M545.2,234.0h1M557.3,234.0h1M569.5,234.0h1M581.6,234.0h1M593.7,234.0h1M605.9,234.0h1M618.0,234.0h1M630.2,234.0h1M642.3,234.0h1M654.4,234.0h1M666.6,234.0h1M678.7,234.0h1M690.9,234.0h1M703.0,234.0h1M96.0,268.1h1M108.1,268.1h1M120.3,268.1h1M132.4,268.1h1M144.6,268.1h1M156.7,268.1h1M168.8,268.1h1M181.0,268.1h1M193.1,268.1h1M205.3,268.1h1M217.4,268.1h1M229.5,268.1h1M241.7,268.1h1M253.8,268.1h1M266.0,268.1h1M278.1,268.1h1M290.2,268.1h1M302.4,268.1h1M314.5,268.1h1M326.7,268.1h1M338.8,268.1h1M350.9,268.1h1M363.1,268.1h1M375.2,268.1h1M387.4,268.1h1M399.5,268.1h1M411.6,268.1h1M423.8,268.1h1M435.9,268.1h1M448.1,268.1h1M460.2,268.1h1M472.3,268.1h1M484.5,268.1h1M496.6,268.1h1M508.8,268.1h1M520.9,268.1h1M533.0,268.1h1M545.2,268.1h1M557.3,268.1h1M569.5,268.1h1M581.6,268.1h1M593.7,268.1h1M605.9,268.1h1M618.0,268.1h1M630.2,268.1h1M642.3,268.1h1M654.4,268.1h1M666.6,268.1h1M678.7,268.1h1M690.9,268.1h1M703.0,268.1h1M96.0,302.2h1M108.1,302.2h1M120.3,302.2h1M132.4,302.2h1M144.6,302.2h1M156.7,302.2h1M168.8,302.2h1M181.0,302.2h1M193.1,302.2h1M205.3,302.2h1M217.4,302.2h1M229.5,302.2h1M241.7,302.2h1M253.8,302.2h1M266.0,302.2h1M278.1,302.2h1M290.2,302.2h1M302.4,302.2h1M314.5,302.2h1M326.7,302.2h1M338.8,302.2h1M350.9,302.2h1M363.1,302.2h1M375.2,302.2h1M387.4,302.2h1M399.5,302.2h1M411.6,302.2h1M423.8,302.2h1M435.9,302.2h1M448.1,302.2h1M460.2,302.2h1M472.3,302.2h1M484.5,302.2h1M496.6,302.2h1M508.8,302.2h1M520.9,302.2h1M533.0,302.2h1M545.2,302.2h1M557.3,302.2h1M569.5,302.2h1M581.6,302.2h1M593.7,302.2h1M605.9,302.2h1M618.0,302.2h1M630.2,302.2h1M642.3,302.2h1M654.4,302.2h1M666.6,302.2h1M678.7,302.2h1M690.9,302.2h1M703.0,302.2h1" stroke="#2e2e2e" stroke-width="1" fill="none"/>
<path d="M96.5,199.9H703.5M400.0,63.5V336.3" stroke="#6a6a6a" stroke-width="0.8" fill="none"/>
<path d="M96.5,197.9v4M108.6,197.9v4M120.8,197.9v4M132.9,197.9v4M145.1,197.9v4M157.2,197.9v4M169.3,197.9v4M181.5,197.9v4M193.6,197.9v4M205.8,197.9v4M217.9,197.9v4M230.0,197.9v4M242.2,197.9v4M254.3,197.9v4M266.5,197.9v4M278.6,197.9v4M290.7,197.9v4M302.9,197.9v4M315.0,197.9v4M327.2,197.9v4M339.3,197.9v4M351.4,197.9v4M363.6,197.9v4M375.7,197.9v4M387.9,197.9v4M400.0,197.9v4M412.1,197.9v4M424.3,197.9v4M436.4,197.9v4M448.6,197.9v4M460.7,197.9v4M472.8,197.9v4M485.0,197.9v4M497.1,197.9v4M509.3,197.9v4M521.4,197.9v4M533.5,197.9v4M545.7,197.9v4M557.8,197.9v4M570.0,197.9v4M582.1,197.9v4M594.2,197.9v4M606.4,197.9v4M618.5,197.9v4M630.7,197.9v4M642.8,197.9v4M654.9,197.9v4M667.1,197.9v4M679.2,197.9v4M691.4,197.9v4M703.5,197.9v4M397.0,63.5h6M397.0,70.3h6M397.0,77.1h6M397.0,84.0h6M397.0,90.8h6M397.0,97.6h6M397.0,104.4h6M397.0,111.2h6M397.0,118.1h6M397.0,124.9h6M397.0,131.7h6M397.0,138.5h6M397.0,145.3h6M397.0,152.2h6M397.0,159.0h6M397.0,165.8h6M397.0,172.6h6M397.0,179.4h6M397.0,186.3h6M397.0,193.1h6M397.0,199.9h6M397.0,206.7h6M397.0,213.5h6M397.0,220.4h6M397.0,227.2h6M397.0,234.0h6M397.0,240.8h6M397.0,247.6h6M397.0,254.5h6M397.0,261.3h6M397.0,268.1h6M397.0,274.9h6M397.0,281.7h6M397.0,288.6h6M397.0,295.4h6M397.0,302.2h6M397.0,309.0h6M397.0,315.8h6M397.0,322.7h6M397.0,329.5h6M397.0,336.3h6" stroke="#8a8a8a" stroke-width="0.9" fill="none"/>
<path d="M96.5,63.5v2M96.5,336.3v-2M108.6,63.5v2M108.6,336.3v-2M120.8,63.5v2M120.8,336.3v-2M132.9,63.5v2M132.9,336.3v-2M145.1,63.5v2M145.1,336.3v-2M157.2,63.5v2M157.2,336.3v-2M169.3,63.5v2M169.3,336.3v-2M181.5,63.5v2M181.5,336.3v-2M193.6,63.5v2M193.6,336.3v-2M205.8,63.5v2M205.8,336.3v-2M217.9,63.5v2M217.9,336.3v-2M230.0,63.5v2M230.0,336.3v-2M242.2,63.5v2M242.2,336.3v-2M254.3,63.5v2M254.3,336.3v-2M266.5,63.5v2M266.5,336.3v-2M278.6,63.5v2M278.6,336.3v-2M290.7,63.5v2M290.7,336.3v-2M302.9,63.5v2M302.9,336.3v-2M315.0,63.5v2M315.0,336.3v-2M327.2,63.5v2M327.2,336.3v-2M339.3,63.5v2M339.3,336.3v-2M351.4,63.5v2M351.4,336.3v-2M363.6,63.5v2M363.6,336.3v-2M375.7,63.5v2M375.7,336.3v-2M387.9,63.5v2M387.9,336.3v-2M400.0,63.5v2M400.0,336.3v-2M412.1,63.5v2M412.1,336.3v-2M424.3,63.5v2M424.3,336.3v-2M436.4,63.5v2M436.4,336.3v-2M448.6,63.5v2M448.6,336.3v-2M460.7,63.5v2M460.7,336.3v-2M472.8,63.5v2M472.8,336.3v-2M485.0,63.5v2M485.0,336.3v-2M497.1,63.5v2M497.1,336.3v-2M509.3,63.5v2M509.3,336.3v-2M521.4,63.5v2M521.4,336.3v-2M533.5,63.5v2M533.5,336.3v-2M545.7,63.5v2M545.7,336.3v-2M557.8,63.5v2M557.8,336.3v-2M570.0,63.5v2M570.0,336.3v-2M582.1,63.5v2M582.1,336.3v-2M594.2,63.5v2M594.2,336.3v-2M606.4,63.5v2M606.4,336.3v-2M618.5,63.5v2M618.5,336.3v-2M630.7,63.5v2M630.7,336.3v-2M642.8,63.5v2M642.8,336.3v-2M654.9,63.5v2M654.9,336.3v-2M667.1,63.5v2M667.1,336.3v-2M679.2,63.5v2M679.2,336.3v-2M691.4,63.5v2M691.4,336.3v-2M703.5,63.5v2M703.5,336.3v-2M96.5,63.5h2M703.5,63.5h-2M96.5,70.3h2M703.5,70.3h-2M96.5,77.1h2M703.5,77.1h-2M96.5,84.0h2M703.5,84.0h-2M96.5,90.8h2M703.5,90.8h-2M96.5,97.6h2M703.5,97.6h-2M96.5,104.4h2M703.5,104.4h-2M96.5,111.2h2M703.5,111.2h-2M96.5,118.1h2M703.5,118.1h-2M96.5,124.9h2M703.5,124.9h-2M96.5,131.7h2M703.5,131.7h-2M96.5,138.5h2M703.5,138.5h-2M96.5,145.3h2M703.5,145.3h-2M96.5,152.2h2M703.5,152.2h-2M96.5,159.0h2M703.5,159.0h-2M96.5,165.8h2M703.5,165.8h-2M96.5,172.6h2M703.5,172.6h-2M96.5,179.4h2M703.5,179.4h-2M96.5,186.3h2M703.5,186.3h-2M96.5,193.1h2M703.5,193.1h-2M96.5,199.9h2M703.5,199.9h-2M96.5,206.7h2M703.5,206.7h-2M96.5,213.5h2M703.5,213.5h-2M96.5,220.4h2M703.5,220.4h-2M96.5,227.2h2M703.5,227.2h-2M96.5,234.0h2M703.5,234.0h-2M96.5,240.8h2M703.5,240.8h-2M96.5,247.6h2M703.5,247.6h-2M96.5,254.5h2M703.5,254.5h-2M96.5,261.3h2M703.5,261.3h-2M96.5,268.1h2M703.5,268.1h-2M96.5,274.9h2M703.5,274.9h-2M96.5,281.7h2M703.5,281.7h-2M96.5,288.6h2M703.5,288.6h-2M96.5,295.4h2M703.5,295.4h-2M96.5,302.2h2M703.5,302.2h-2M96.5,309.0h2M703.5,309.0h-2M96.5,315.8h2M703.5,315.8h-2M96.5,322.7h2M703.5,322.7h-2M96.5,329.5h2M703.5,329.5h-2M96.5,336.3h2M703.5,336.3h-2" stroke="#4a4a4a" stroke-width="0.8" fill="none"/>
<rect x="96.5" y="63.5" width="607" height="272.5" fill="none" stroke="#c8c8c8" stroke-width="1"/>
<line x1="242.5" y1="64" x2="242.5" y2="335" stroke="#3a6e80" stroke-width="1.2"/>
<line x1="298.5" y1="64" x2="298.5" y2="335" stroke="#38506a" stroke-width="1" stroke-dasharray="1.5,1.5"/>
<path d="M96.5,231.5 L114.5,231.5 L115.6,228.0 L116.8,231.5 L123.1,231.5 L123.4,191.5 L123.9,121.5 L124.7,102.2 L125.9,98.2 L127.6,97.2 L128.4,97.0 L130.4,98.1 L132.4,96.9 L134.4,98.3 L136.4,96.7 L138.4,97.7 L140.4,97.6 L142.4,98.8 L144.4,97.4 L146.4,98.1 L148.4,96.5 L150.4,98.5 L152.4,96.8 L154.4,98.6 L156.4,97.2 L158.4,98.3 L160.4,97.3 L162.4,96.0 L164.4,96.0 L166.4,98.6 L168.4,98.0 L170.4,98.4 L172.4,98.0 L174.4,98.7 L176.4,98.3 L178.4,98.6 L180.4,98.2 L182.4,98.9 L184.4,98.3 L186.4,99.2 L188.4,98.4 L190.4,99.3 L192.4,98.7 L194.4,99.3 L196.4,98.8 L198.4,99.5 L200.4,98.6 L202.4,99.2 L204.4,99.1 L206.4,99.3 L208.4,98.8 L210.4,99.5 L212.4,99.1 L214.4,99.6 L216.6,99.5 L217.8,171.5 L218.5,229.5 L219.6,231.7 L221.6,230.7 L223.6,231.8 L225.6,231.0 L227.6,231.5 L307.9,231.5 L308.9,229.0 L310.1,231.5 L310.9,231.5 L311.2,191.5 L311.8,121.5 L312.6,102.2 L313.8,98.2 L315.4,97.2 L316.2,96.7 L318.2,97.9 L320.2,97.0 L322.2,98.2 L324.2,96.8 L326.2,98.7 L328.2,96.7 L330.2,98.9 L332.2,96.6 L334.2,99.1 L336.2,96.9 L338.2,98.1 L340.2,96.8 L342.2,99.2 L344.2,96.8 L346.2,98.8 L348.2,97.2 L350.2,96.0 L352.2,96.0 L354.2,98.5 L356.2,98.2 L358.2,98.4 L360.2,98.0 L362.2,98.9 L364.2,98.5 L366.2,98.9 L368.2,98.4 L370.2,98.7 L372.2,98.5 L374.2,99.1 L376.2,98.4 L378.2,98.9 L380.2,98.6 L382.2,99.0 L384.2,98.6 L386.2,99.2 L388.2,98.6 L390.2,99.6 L392.2,98.9 L394.2,99.7 L396.2,99.1 L398.2,99.4 L400.2,99.1 L402.2,99.4 L405.5,99.5 L406.7,171.5 L407.4,229.5 L408.5,231.7 L410.5,230.7 L412.5,231.8 L414.5,231.0 L416.5,231.5 L495.8,231.5 L496.9,229.0 L498.0,231.5 L498.9,231.5 L499.2,191.5 L499.7,121.5 L500.5,102.2 L501.7,98.2 L503.4,97.2 L504.2,97.1 L506.2,97.9 L508.2,96.6 L510.2,97.7 L512.2,97.5 L514.2,98.7 L516.2,97.2 L518.2,98.9 L520.2,96.5 L522.2,98.3 L524.2,97.2 L526.2,98.5 L528.2,97.1 L530.2,98.7 L532.2,97.3 L534.2,98.9 L536.2,96.9 L538.2,96.0 L540.2,96.0 L542.2,98.6 L544.2,98.2 L546.2,98.5 L548.2,97.9 L550.2,98.7 L552.2,98.2 L554.2,98.6 L556.2,98.4 L558.2,98.9 L560.2,98.7 L562.2,99.0 L564.2,98.5 L566.2,98.9 L568.2,98.6 L570.2,99.2 L572.2,98.6 L574.2,99.2 L576.2,98.7 L578.2,99.5 L580.2,99.2 L582.2,99.3 L584.2,98.9 L586.2,99.8 L588.2,99.3 L590.2,99.7 L593.7,99.5 L594.9,171.5 L595.6,229.5 L596.7,231.7 L598.7,230.7 L600.7,231.8 L602.7,231.0 L604.7,231.5 L683.9,231.5 L685.0,229.0 L686.0,231.5 L687.0,231.5 L687.2,191.5 L687.8,121.5 L688.5,102.2 L689.8,98.2 L691.5,97.2 L692.2,96.6 L694.2,97.8 L696.2,96.9 L698.2,97.9 L700.2,97.0 L703.0,97.7" fill="none" stroke="#bcb890" stroke-width="0.7"/>
<path d="M96.5,126.5 L97.5,123.6 L98.5,120.7 L99.5,118.0 L100.5,115.3 L101.5,112.8 L102.5,110.3 L103.5,108.0 L104.5,105.8 L105.5,103.7 L106.5,101.7 L107.5,99.8 L108.5,98.1 L109.5,96.4 L110.5,94.9 L111.5,93.6 L112.5,92.3 L113.5,91.2 L114.5,90.2 L115.5,89.3 L116.5,88.6 L117.5,88.0 L118.5,87.6 L119.5,87.2 L120.5,87.1 L121.5,87.0 L122.5,87.1 L123.5,87.3 L124.5,87.6 L125.5,88.1 L126.5,88.8 L127.5,89.5 L128.5,90.4 L129.5,91.4 L130.5,92.6 L131.5,93.8 L132.5,95.2 L133.5,96.8 L134.5,98.4 L135.5,100.2 L136.5,102.1 L137.5,104.1 L138.5,106.2 L139.5,108.5 L140.5,110.8 L141.5,113.3 L142.5,115.9 L143.5,118.5 L144.5,121.3 L145.5,124.2 L146.5,127.1 L147.5,130.2 L148.5,133.3 L149.5,136.6 L150.5,139.9 L151.5,143.2 L152.5,146.7 L153.5,150.2 L154.5,153.8 L155.5,157.4 L156.5,161.1 L157.5,164.9 L158.5,168.7 L159.5,172.5 L160.5,176.4 L161.5,180.3 L162.5,184.3 L163.5,188.3 L164.5,192.3 L165.5,196.3 L166.5,200.3 L167.5,204.4 L168.5,208.4 L169.5,212.4 L170.5,216.5 L171.5,220.5 L172.5,224.5 L173.5,228.5 L174.5,232.5 L175.5,236.4 L176.5,240.4 L177.5,244.2 L178.5,248.1 L179.5,251.9 L180.5,255.6 L181.5,259.3 L182.5,262.9 L183.5,266.5 L184.5,270.0 L185.5,273.4 L186.5,276.8 L187.5,280.1 L188.5,283.3 L189.5,286.4 L190.5,289.5 L191.5,292.4 L192.5,295.3 L193.5,298.0 L194.5,300.7 L195.5,303.2 L196.5,305.7 L197.5,308.0 L198.5,310.2 L199.5,312.3 L200.5,314.3 L201.5,316.2 L202.5,317.9 L203.5,319.6 L204.5,321.1 L205.5,322.4 L206.5,323.6 L207.5,324.7 L208.5,325.4 L209.5,325.9 L210.5,326.2 L211.5,326.4 L212.5,326.5 L213.5,326.5 L214.5,326.5 L215.5,326.5 L216.5,326.5 L217.5,326.5 L218.5,326.4 L219.5,326.4 L220.5,326.2 L221.5,325.9 L222.5,325.3 L223.5,324.5 L224.5,323.4 L225.5,322.2 L226.5,320.8 L227.5,319.2 L228.5,317.6 L229.5,315.8 L230.5,313.9 L231.5,311.9 L232.5,309.8 L233.5,307.5 L234.5,305.2 L235.5,302.7 L236.5,300.1 L237.5,297.5 L238.5,294.7 L239.5,291.8 L240.5,288.9 L241.5,285.8 L242.5,282.7 L243.5,279.4 L244.5,276.1 L245.5,272.8 L246.5,269.3 L247.5,265.8 L248.5,262.2 L249.5,258.6 L250.5,254.9 L251.5,251.1 L252.5,247.3 L253.5,243.5 L254.5,239.6 L255.5,235.7 L256.5,231.7 L257.5,227.7 L258.5,223.7 L259.5,219.7 L260.5,215.7 L261.5,211.6 L262.5,207.6 L263.5,203.6 L264.5,199.5 L265.5,195.5 L266.5,191.5 L267.5,187.5 L268.5,183.5 L269.5,179.6 L270.5,175.6 L271.5,171.8 L272.5,167.9 L273.5,164.1 L274.5,160.4 L275.5,156.7 L276.5,153.1 L277.5,149.5 L278.5,146.0 L279.5,142.6 L280.5,139.2 L281.5,135.9 L282.5,132.7 L283.5,129.6 L284.5,126.5 L285.5,123.6 L286.5,120.7 L287.5,118.0 L288.5,115.3 L289.5,112.8 L290.5,110.3 L291.5,108.0 L292.5,105.8 L293.5,103.7 L294.5,101.7 L295.5,99.8 L296.5,98.1 L297.5,96.4 L298.5,94.9 L299.5,93.6 L300.5,92.3 L301.5,91.2 L302.5,90.2 L303.5,89.3 L304.5,88.6 L305.5,88.0 L306.5,87.6 L307.5,87.2 L308.5,87.1 L309.5,87.0 L310.5,87.1 L311.5,87.3 L312.5,87.6 L313.5,88.1 L314.5,88.8 L315.5,89.5 L316.5,90.4 L317.5,91.4 L318.5,92.6 L319.5,93.8 L320.5,95.2 L321.5,96.8 L322.5,98.4 L323.5,100.2 L324.5,102.1 L325.5,104.1 L326.5,106.2 L327.5,108.5 L328.5,110.8 L329.5,113.3 L330.5,115.9 L331.5,118.5 L332.5,121.3 L333.5,124.2 L334.5,127.1 L335.5,130.2 L336.5,133.3 L337.5,136.6 L338.5,139.9 L339.5,143.2 L340.5,146.7 L341.5,150.2 L342.5,153.8 L343.5,157.4 L344.5,161.1 L345.5,164.9 L346.5,168.7 L347.5,172.5 L348.5,176.4 L349.5,180.3 L350.5,184.3 L351.5,188.3 L352.5,192.3 L353.5,196.3 L354.5,200.3 L355.5,204.4 L356.5,208.4 L357.5,212.4 L358.5,216.5 L359.5,220.5 L360.5,224.5 L361.5,228.5 L362.5,232.5 L363.5,236.4 L364.5,240.4 L365.5,244.2 L366.5,248.1 L367.5,251.9 L368.5,255.6 L369.5,259.3 L370.5,262.9 L371.5,266.5 L372.5,270.0 L373.5,273.4 L374.5,276.8 L375.5,280.1 L376.5,283.3 L377.5,286.4 L378.5,289.5 L379.5,292.4 L380.5,295.3 L381.5,298.0 L382.5,300.7 L383.5,303.2 L384.5,305.7 L385.5,308.0 L386.5,310.2 L387.5,312.3 L388.5,314.3 L389.5,316.2 L390.5,317.9 L391.5,319.6 L392.5,321.1 L393.5,322.4 L394.5,323.6 L395.5,324.7 L396.5,325.4 L397.5,325.9 L398.5,326.2 L399.5,326.4 L400.5,326.5 L401.5,326.5 L402.5,326.5 L403.5,326.5 L404.5,326.5 L405.5,326.5 L406.5,326.4 L407.5,326.4 L408.5,326.2 L409.5,325.9 L410.5,325.3 L411.5,324.5 L412.5,323.4 L413.5,322.2 L414.5,320.8 L415.5,319.2 L416.5,317.6 L417.5,315.8 L418.5,313.9 L419.5,311.9 L420.5,309.8 L421.5,307.5 L422.5,305.2 L423.5,302.7 L424.5,300.1 L425.5,297.5 L426.5,294.7 L427.5,291.8 L428.5,288.9 L429.5,285.8 L430.5,282.7 L431.5,279.4 L432.5,276.1 L433.5,272.8 L434.5,269.3 L435.5,265.8 L436.5,262.2 L437.5,258.6 L438.5,254.9 L439.5,251.1 L440.5,247.3 L441.5,243.5 L442.5,239.6 L443.5,235.7 L444.5,231.7 L445.5,227.7 L446.5,223.7 L447.5,219.7 L448.5,215.7 L449.5,211.6 L450.5,207.6 L451.5,203.6 L452.5,199.5 L453.5,195.5 L454.5,191.5 L455.5,187.5 L456.5,183.5 L457.5,179.6 L458.5,175.6 L459.5,171.8 L460.5,167.9 L461.5,164.1 L462.5,160.4 L463.5,156.7 L464.5,153.1 L465.5,149.5 L466.5,146.0 L467.5,142.6 L468.5,139.2 L469.5,135.9 L470.5,132.7 L471.5,129.6 L472.5,126.5 L473.5,123.6 L474.5,120.7 L475.5,118.0 L476.5,115.3 L477.5,112.8 L478.5,110.3 L479.5,108.0 L480.5,105.8 L481.5,103.7 L482.5,101.7 L483.5,99.8 L484.5,98.1 L485.5,96.4 L486.5,94.9 L487.5,93.6 L488.5,92.3 L489.5,91.2 L490.5,90.2 L491.5,89.3 L492.5,88.6 L493.5,88.0 L494.5,87.6 L495.5,87.2 L496.5,87.1 L497.5,87.0 L498.5,87.1 L499.5,87.3 L500.5,87.6 L501.5,88.1 L502.5,88.8 L503.5,89.5 L504.5,90.4 L505.5,91.4 L506.5,92.6 L507.5,93.8 L508.5,95.2 L509.5,96.8 L510.5,98.4 L511.5,100.2 L512.5,102.1 L513.5,104.1 L514.5,106.2 L515.5,108.5 L516.5,110.8 L517.5,113.3 L518.5,115.9 L519.5,118.5 L520.5,121.3 L521.5,124.2 L522.5,127.1 L523.5,130.2 L524.5,133.3 L525.5,136.6 L526.5,139.9 L527.5,143.2 L528.5,146.7 L529.5,150.2 L530.5,153.8 L531.5,157.4 L532.5,161.1 L533.5,164.9 L534.5,168.7 L535.5,172.5 L536.5,176.4 L537.5,180.3 L538.5,184.3 L539.5,188.3 L540.5,192.3 L541.5,196.3 L542.5,200.3 L543.5,204.4 L544.5,208.4 L545.5,212.4 L546.5,216.5 L547.5,220.5 L548.5,224.5 L549.5,228.5 L550.5,232.5 L551.5,236.4 L552.5,240.4 L553.5,244.2 L554.5,248.1 L555.5,251.9 L556.5,255.6 L557.5,259.3 L558.5,262.9 L559.5,266.5 L560.5,270.0 L561.5,273.4 L562.5,276.8 L563.5,280.1 L564.5,283.3 L565.5,286.4 L566.5,289.5 L567.5,292.4 L568.5,295.3 L569.5,298.0 L570.5,300.7 L571.5,303.2 L572.5,305.7 L573.5,308.0 L574.5,310.2 L575.5,312.3 L576.5,314.3 L577.5,316.2 L578.5,317.9 L579.5,319.6 L580.5,321.1 L581.5,322.4 L582.5,323.6 L583.5,324.7 L584.5,325.4 L585.5,325.9 L586.5,326.2 L587.5,326.4 L588.5,326.5 L589.5,326.5 L590.5,326.5 L591.5,326.5 L592.5,326.5 L593.5,326.5 L594.5,326.4 L595.5,326.4 L596.5,326.2 L597.5,325.9 L598.5,325.3 L599.5,324.5 L600.5,323.4 L601.5,322.2 L602.5,320.8 L603.5,319.2 L604.5,317.6 L605.5,315.8 L606.5,313.9 L607.5,311.9 L608.5,309.8 L609.5,307.5 L610.5,305.2 L611.5,302.7 L612.5,300.1 L613.5,297.5 L614.5,294.7 L615.5,291.8 L616.5,288.9 L617.5,285.8 L618.5,282.7 L619.5,279.4 L620.5,276.1 L621.5,272.8 L622.5,269.3 L623.5,265.8 L624.5,262.2 L625.5,258.6 L626.5,254.9 L627.5,251.1 L628.5,247.3 L629.5,243.5 L630.5,239.6 L631.5,235.7 L632.5,231.7 L633.5,227.7 L634.5,223.7 L635.5,219.7 L636.5,215.7 L637.5,211.6 L638.5,207.6 L639.5,203.6 L640.5,199.5 L641.5,195.5 L642.5,191.5 L643.5,187.5 L644.5,183.5 L645.5,179.6 L646.5,175.6 L647.5,171.8 L648.5,167.9 L649.5,164.1 L650.5,160.4 L651.5,156.7 L652.5,153.1 L653.5,149.5 L654.5,146.0 L655.5,142.6 L656.5,139.2 L657.5,135.9 L658.5,132.7 L659.5,129.6 L660.5,126.5 L661.5,123.6 L662.5,120.7 L663.5,118.0 L664.5,115.3 L665.5,112.8 L666.5,110.3 L667.5,108.0 L668.5,105.8 L669.5,103.7 L670.5,101.7 L671.5,99.8 L672.5,98.1 L673.5,96.4 L674.5,94.9 L675.5,93.6 L676.5,92.3 L677.5,91.2 L678.5,90.2 L679.5,89.3 L680.5,88.6 L681.5,88.0 L682.5,87.6 L683.5,87.2 L684.5,87.1 L685.5,87.0 L686.5,87.1 L687.5,87.3 L688.5,87.6 L689.5,88.1 L690.5,88.8 L691.5,89.5 L692.5,90.4 L693.5,91.4 L694.5,92.6 L695.5,93.8 L696.5,95.2 L697.5,96.8 L698.5,98.4 L699.5,100.2 L700.5,102.1 L701.5,104.1 L702.5,106.2" fill="none" stroke="#58924f" stroke-width="0.75"/>
<path d="M88.5,204.5h4.5l2.5,3l-2.5,3h-4.5q-1,0 -1,-1v-4q0,-1 1,-1z" fill="#22c822"/><path d="M90,206h2.2l-2,3h2" stroke="#0a5a0a" stroke-width="0.7" fill="none"/>
<path d="M88.5,229.5h4.5l2.5,2.7l-2.5,2.7h-4.5q-1,0 -1,-1v-3.4q0,-1 1,-1z" fill="#e8e800"/><path d="M90.5,230.8l1,-0.6v3.6" stroke="#5a5a00" stroke-width="0.7" fill="none"/>
<path d="M704.8,167.7l2.5,-2.3h4.6v4.6h-4.6z" fill="#eeee00"/>
</svg>
<div class="t" style="left:98px;top:327.8px;color:#e4e060;font-size:6.85px;line-height:7px">Cursor : <svg width="6.5" height="5.5" viewBox="0 0 6.5 5.5" style="display:inline-block;vertical-align:0;margin:0 0.3px"><path d="M0.6,5 L3.25,0.6 L5.9,5 Z" fill="none" stroke="#e4e060" stroke-width="0.65"/></svg>Time = 46.0uS. <svg width="6.5" height="5.5" viewBox="0 0 6.5 5.5" style="display:inline-block;vertical-align:0;margin:0 0.3px"><path d="M0.6,5 L3.25,0.6 L5.9,5 Z" fill="none" stroke="#e4e060" stroke-width="0.65"/></svg>Frequency = 21.76KHz</div>
<div class="a" style="left:96px;top:336.5px;width:37.8px;height:8.8px;background:#000"></div>
<div class="t" style="left:97px;top:338px;color:#d0d070;font-size:5.6px">CH1 <svg width="5.5" height="4" viewBox="0 0 5.5 4" style="display:inline-block;vertical-align:0.3px;margin:0 0.4px"><path d="M0.3,1.2h4.9M0.3,3h1.2M2.15,3h1.2M4,3h1.2" stroke="#d0d070" stroke-width="0.6"/></svg>&nbsp; 2.00V</div>
<div class="a" style="left:154.2px;top:336.5px;width:38.5px;height:8.8px;background:#000"></div>
<div class="t" style="left:155px;top:338px;color:#30c030;font-size:5.6px">CH2 <svg width="5.5" height="4" viewBox="0 0 5.5 4" style="display:inline-block;vertical-align:0.3px;margin:0 0.4px"><path d="M0.3,1.2h4.9M0.3,3h1.2M2.15,3h1.2M4,3h1.2" stroke="#30c030" stroke-width="0.6"/></svg> 200mV</div>
<div class="a" style="left:615.5px;top:336.5px;width:88px;height:8.8px;background:#000"></div>
<div class="t" style="left:617px;top:338px;color:#c05a20;font-size:5.2px">Time: 50.00us</div><div class="t" style="left:657.5px;top:338px;color:#c05a20;font-size:5.2px">Sample Rate: 1MHz</div>

<!-- CONTROL PANEL -->
<div class="a" style="left:715.5px;top:33.5px;width:84.5px;height:317px;background:#d4d0c8;border-left:0.6px solid #808080"></div>
<div class="a" style="left:716px;top:34px;width:84px;height:8px;background:#0a246a"></div>
<div class="t" style="left:718px;top:36.0px;color:#fff;font-size:5px">Control Panel</div>
<svg class="a" style="left:785px;top:35px" width="15" height="6" viewBox="0 0 15 6"><path d="M2,1h3v3h-3zM1.5,4h4M3.5,4v2" stroke="#fff" stroke-width="0.6" fill="none"/><path d="M9,1l4,4M13,1l-4,4" stroke="#fff" stroke-width="0.9"/></svg>
<div class="a" style="left:716.5px;top:42.5px;width:83.0px;height:8.0px;background:#fff;border-top:0.8px solid #808080;border-left:0.8px solid #808080;border-bottom:0.6px solid #e8e8e8;border-right:0.6px solid #e8e8e8"></div>
<div class="t" style="left:718.0px;top:44.7px;color:#222;font-size:4.8px">Scope</div>
<div class="a" style="left:793.2px;top:43.3px;width:5.5px;height:6.6px;background:#d4d0c8;border-right:0.6px solid #404040;border-bottom:0.6px solid #404040;border-left:0.5px solid #fff;border-top:0.5px solid #fff"></div>
<svg class="a" style="left:793.2px;top:42.5px" width="6" height="8.0" viewBox="0 0 6 8.0"><path d="M1.3,3.2h3l-1.5,1.8z" fill="#000"/></svg>
<div class="a" style="left:716px;top:50.5px;width:84px;height:7px;background:linear-gradient(to bottom,#f6f5f2,#e9e7e2)"></div>
<div class="a" style="left:716px;top:57.5px;width:77px;height:285px;background:#d4d0c8"></div>
<div class="a" style="left:718.3px;top:62px;width:74.0px;height:52.5px;border:0.7px solid #bab6ae;box-shadow:inset 0.6px 0.6px 0 #f4f4f4, 0.6px 0.6px 0 #f4f4f4"></div>
<div class="t" style="left:740.8px;width:40px;text-align:center;top:64.5px;color:#222;font-size:4.8px">Horizontal</div>
<div class="t" style="left:722.5px;top:72.2px;color:#222;font-size:4.8px">Time/DIV</div>
<div class="a" style="left:722.2px;top:79px;width:29.6px;height:8.3px;background:#fff;border-top:0.8px solid #808080;border-left:0.8px solid #808080;border-bottom:0.6px solid #e8e8e8;border-right:0.6px solid #e8e8e8"></div>
<div class="t" style="left:723.7px;top:81.4px;color:#222;font-size:4.8px">50.00us</div>
<div class="a" style="left:745.5px;top:79.8px;width:5.5px;height:6.9px;background:#d4d0c8;border-right:0.6px solid #404040;border-bottom:0.6px solid #404040;border-left:0.5px solid #fff;border-top:0.5px solid #fff"></div>
<svg class="a" style="left:745.5px;top:79.0px" width="6" height="8.3" viewBox="0 0 6 8.3"><path d="M1.3,3.3h3l-1.5,1.8z" fill="#000"/></svg>
<div class="t" style="left:722.5px;top:93.2px;color:#222;font-size:4.8px">Format</div>
<div class="a" style="left:722.2px;top:100.8px;width:29.6px;height:8.2px;background:#fff;border-top:0.8px solid #808080;border-left:0.8px solid #808080;border-bottom:0.6px solid #e8e8e8;border-right:0.6px solid #e8e8e8"></div>
<div class="t" style="left:723.7px;top:103.1px;color:#222;font-size:4.8px"><span style="color:#888">Y-T</span></div>
<div class="a" style="left:745.5px;top:101.6px;width:5.5px;height:6.8px;background:#d4d0c8;border-right:0.6px solid #404040;border-bottom:0.6px solid #404040;border-left:0.5px solid #fff;border-top:0.5px solid #fff"></div>
<svg class="a" style="left:745.5px;top:100.8px" width="6" height="8.2" viewBox="0 0 6 8.2"><path d="M1.3,3.3h3l-1.5,1.8z" fill="#000"/></svg>
<svg class="a" style="left:760px;top:74.2px" width="36" height="36" viewBox="760 74.2 36 36">
<circle cx="778" cy="92.2" r="14.1" fill="none" stroke="#8a8890" stroke-width="3.2"/>
<circle cx="778" cy="92.2" r="12.3" fill="none" stroke="#d0d4ec" stroke-width="1"/>
<circle cx="778" cy="92.2" r="11.8" fill="#0010c8" stroke="#404050" stroke-width="0.5"/>
<path d="M768.2,102.7 l-2.8,3 M787.8,102.7 l2.8,3" stroke="#282828" stroke-width="0.8"/>
<path d="M779.8,90.4L785.1,85.1" stroke="#d8e8f8" stroke-width="0.9"/>
</svg>
<div class="a" style="left:718.3px;top:116.5px;width:74.0px;height:123.0px;border:0.7px solid #bab6ae;box-shadow:inset 0.6px 0.6px 0 #f4f4f4, 0.6px 0.6px 0 #f4f4f4"></div>
<div class="t" style="left:740.2px;width:40px;text-align:center;top:121.0px;color:#222;font-size:4.8px">Vertical</div>
<div class="a" style="left:722.3px;top:130px;width:4.6px;height:4.6px;background:#fff;border-top:0.8px solid #808080;border-left:0.8px solid #808080;border-right:0.5px solid #f0f0f0;border-bottom:0.5px solid #f0f0f0"></div>
<svg class="a" style="left:722.3px;top:130px" width="4.6" height="4.6" viewBox="0 0 5 5"><path d="M1,2.3 l1.1,1.3 l2,-2.6" stroke="#000" stroke-width="0.9" fill="none"/></svg>
<div class="t" style="left:730px;top:130.3px;color:#222;font-size:4.8px">CH1</div>
<div class="a" style="left:722.3px;top:139px;width:29.5px;height:7.8px;background:#fff;border-top:0.8px solid #808080;border-left:0.8px solid #808080;border-bottom:0.6px solid #e8e8e8;border-right:0.6px solid #e8e8e8"></div>
<div class="t" style="left:723.8px;top:141.1px;color:#222;font-size:4.8px">2.00V</div>
<div class="a" style="left:745.5px;top:139.8px;width:5.5px;height:6.4px;background:#d4d0c8;border-right:0.6px solid #404040;border-bottom:0.6px solid #404040;border-left:0.5px solid #fff;border-top:0.5px solid #fff"></div>
<svg class="a" style="left:745.5px;top:139.0px" width="6" height="7.8" viewBox="0 0 6 7.8"><path d="M1.3,3.1h3l-1.5,1.8z" fill="#000"/></svg>
<svg class="a" style="left:760px;top:130px" width="36" height="36" viewBox="760 130 36 36">
<circle cx="778" cy="148" r="14.1" fill="none" stroke="#8a8890" stroke-width="3.2"/>
<circle cx="778" cy="148" r="12.3" fill="none" stroke="#d0d4ec" stroke-width="1"/>
<circle cx="778" cy="148" r="11.8" fill="#f8f000" stroke="#404050" stroke-width="0.5"/>
<path d="M768.2,158.5 l-2.8,3 M787.8,158.5 l2.8,3" stroke="#282828" stroke-width="0.8"/>
<path d="M777.6,145.5L776.3,138.2" stroke="#f8f060" stroke-width="0.9"/>
</svg>
<div class="a" style="left:722.3px;top:168.2px;width:29.5px;height:8.0px;background:#fff;border-top:0.8px solid #808080;border-left:0.8px solid #808080;border-bottom:0.6px solid #e8e8e8;border-right:0.6px solid #e8e8e8"></div>
<div class="t" style="left:723.8px;top:170.4px;color:#222;font-size:4.8px">x10</div>
<div class="a" style="left:745.5px;top:169.0px;width:5.5px;height:6.6px;background:#d4d0c8;border-right:0.6px solid #404040;border-bottom:0.6px solid #404040;border-left:0.5px solid #fff;border-top:0.5px solid #fff"></div>
<svg class="a" style="left:745.5px;top:168.2px" width="6" height="8.0" viewBox="0 0 6 8.0"><path d="M1.3,3.2h3l-1.5,1.8z" fill="#000"/></svg>
<div class="a" style="left:768.3px;top:170.8px;width:5px;height:5px;background:#fff;border-top:0.8px solid #808080;border-left:0.8px solid #808080;border-right:0.5px solid #f0f0f0;border-bottom:0.5px solid #f0f0f0"></div>
<div class="t" style="left:776.3px;top:171.5px;color:#222;font-size:4.8px">Invert</div>
<div class="a" style="left:722.3px;top:188.5px;width:4.6px;height:4.6px;background:#fff;border-top:0.8px solid #808080;border-left:0.8px solid #808080;border-right:0.5px solid #f0f0f0;border-bottom:0.5px solid #f0f0f0"></div>
<svg class="a" style="left:722.3px;top:188.5px" width="4.6" height="4.6" viewBox="0 0 5 5"><path d="M1,2.3 l1.1,1.3 l2,-2.6" stroke="#000" stroke-width="0.9" fill="none"/></svg>
<div class="t" style="left:730px;top:188.8px;color:#222;font-size:4.8px">CH2</div>
<div class="a" style="left:722.3px;top:197.6px;width:29.5px;height:8.1px;background:#fff;border-top:0.8px solid #808080;border-left:0.8px solid #808080;border-bottom:0.6px solid #e8e8e8;border-right:0.6px solid #e8e8e8"></div>
<div class="a" style="left:723.3px;top:198.6px;width:21.5px;height:6.1px;background:#0a246a"></div>
<div class="t" style="left:723.5px;top:199.8px;color:#fff;font-size:4.8px">200mV</div>
<div class="a" style="left:745.5px;top:198.4px;width:5.5px;height:6.7px;background:#d4d0c8;border-right:0.6px solid #404040;border-bottom:0.6px solid #404040;border-left:0.5px solid #fff;border-top:0.5px solid #fff"></div>
<svg class="a" style="left:745.5px;top:197.6px" width="6" height="8.1" viewBox="0 0 6 8.1"><path d="M1.3,3.2h3l-1.5,1.8z" fill="#000"/></svg>
<svg class="a" style="left:760px;top:190px" width="36" height="36" viewBox="760 190 36 36">
<circle cx="778" cy="208" r="14.1" fill="none" stroke="#8a8890" stroke-width="3.2"/>
<circle cx="778" cy="208" r="12.3" fill="none" stroke="#d0d4ec" stroke-width="1"/>
<circle cx="778" cy="208" r="11.8" fill="#18e818" stroke="#404050" stroke-width="0.5"/>
<path d="M768.2,218.5 l-2.8,3 M787.8,218.5 l2.8,3" stroke="#282828" stroke-width="0.8"/>
<path d="M778.9,205.7L781.4,198.6" stroke="#a8f0a8" stroke-width="0.9"/>
</svg>
<div class="a" style="left:722.3px;top:226.7px;width:29.5px;height:8.1px;background:#fff;border-top:0.8px solid #808080;border-left:0.8px solid #808080;border-bottom:0.6px solid #e8e8e8;border-right:0.6px solid #e8e8e8"></div>
<div class="t" style="left:723.8px;top:228.9px;color:#222;font-size:4.8px">x1</div>
<div class="a" style="left:745.5px;top:227.5px;width:5.5px;height:6.7px;background:#d4d0c8;border-right:0.6px solid #404040;border-bottom:0.6px solid #404040;border-left:0.5px solid #fff;border-top:0.5px solid #fff"></div>
<svg class="a" style="left:745.5px;top:226.7px" width="6" height="8.1" viewBox="0 0 6 8.1"><path d="M1.3,3.3h3l-1.5,1.8z" fill="#000"/></svg>
<div class="a" style="left:768.3px;top:229.2px;width:5px;height:5px;background:#fff;border-top:0.8px solid #808080;border-left:0.8px solid #808080;border-right:0.5px solid #f0f0f0;border-bottom:0.5px solid #f0f0f0"></div>
<div class="t" style="left:776.3px;top:230.0px;color:#222;font-size:4.8px">Invert</div>
<div class="a" style="left:719px;top:244.7px;width:73.3px;height:70.6px;border:0.7px solid #bab6ae;box-shadow:inset 0.6px 0.6px 0 #f4f4f4, 0.6px 0.6px 0 #f4f4f4"></div>
<div class="t" style="left:739.3px;width:40px;text-align:center;top:247.0px;color:#222;font-size:4.8px">Trigger</div>
<div class="t" style="left:724.7px;top:260.9px;color:#222;font-size:4.5px">Trigger Mode</div>
<div class="a" style="left:764.3px;top:259.2px;width:29.2px;height:7.6px;background:#fff;border-top:0.8px solid #808080;border-left:0.8px solid #808080;border-bottom:0.6px solid #e8e8e8;border-right:0.6px solid #e8e8e8"></div>
<div class="t" style="left:765.8px;top:261.2px;color:#222;font-size:4.8px">Edge</div>
<div class="a" style="left:787.2px;top:260.0px;width:5.5px;height:6.2px;background:#d4d0c8;border-right:0.6px solid #404040;border-bottom:0.6px solid #404040;border-left:0.5px solid #fff;border-top:0.5px solid #fff"></div>
<svg class="a" style="left:787.2px;top:259.2px" width="6" height="7.6" viewBox="0 0 6 7.6"><path d="M1.3,3.0h3l-1.5,1.8z" fill="#000"/></svg>
<div class="t" style="left:724.7px;top:275.4px;color:#222;font-size:4.5px">Trigger Sweep</div>
<div class="a" style="left:764.3px;top:273.7px;width:29.2px;height:7.6px;background:#fff;border-top:0.8px solid #808080;border-left:0.8px solid #808080;border-bottom:0.6px solid #e8e8e8;border-right:0.6px solid #e8e8e8"></div>
<div class="t" style="left:765.8px;top:275.7px;color:#222;font-size:4.8px">AUTO</div>
<div class="a" style="left:787.2px;top:274.5px;width:5.5px;height:6.2px;background:#d4d0c8;border-right:0.6px solid #404040;border-bottom:0.6px solid #404040;border-left:0.5px solid #fff;border-top:0.5px solid #fff"></div>
<svg class="a" style="left:787.2px;top:273.7px" width="6" height="7.6" viewBox="0 0 6 7.6"><path d="M1.3,3.0h3l-1.5,1.8z" fill="#000"/></svg>
<div class="t" style="left:724.7px;top:289.9px;color:#222;font-size:4.5px">Trigger Source</div>
<div class="a" style="left:764.3px;top:288.2px;width:29.2px;height:7.6px;background:#fff;border-top:0.8px solid #808080;border-left:0.8px solid #808080;border-bottom:0.6px solid #e8e8e8;border-right:0.6px solid #e8e8e8"></div>
<div class="t" style="left:765.8px;top:290.2px;color:#222;font-size:4.8px">CH1</div>
<div class="a" style="left:787.2px;top:289.0px;width:5.5px;height:6.2px;background:#d4d0c8;border-right:0.6px solid #404040;border-bottom:0.6px solid #404040;border-left:0.5px solid #fff;border-top:0.5px solid #fff"></div>
<svg class="a" style="left:787.2px;top:288.2px" width="6" height="7.6" viewBox="0 0 6 7.6"><path d="M1.3,3.0h3l-1.5,1.8z" fill="#000"/></svg>
<div class="t" style="left:724.7px;top:304.4px;color:#222;font-size:4.5px">Trigger Slope</div>
<div class="a" style="left:764.3px;top:302.7px;width:29.2px;height:7.6px;background:#fff;border-top:0.8px solid #808080;border-left:0.8px solid #808080;border-bottom:0.6px solid #e8e8e8;border-right:0.6px solid #e8e8e8"></div>
<div class="t" style="left:765.8px;top:304.7px;color:#222;font-size:4.8px">+</div>
<div class="a" style="left:787.2px;top:303.5px;width:5.5px;height:6.2px;background:#d4d0c8;border-right:0.6px solid #404040;border-bottom:0.6px solid #404040;border-left:0.5px solid #fff;border-top:0.5px solid #fff"></div>
<svg class="a" style="left:787.2px;top:302.7px" width="6" height="7.6" viewBox="0 0 6 7.6"><path d="M1.3,3.0h3l-1.5,1.8z" fill="#000"/></svg>
<div class="a" style="left:793px;top:61.5px;width:7px;height:280px;background:#ecebe8"></div>
<div class="a" style="left:793px;top:67px;width:7px;height:235px;background:#d4d0c8;border-left:0.6px solid #fff;border-top:0.6px solid #fff;border-right:0.7px solid #888;border-bottom:0.7px solid #888"></div>
<div class="a" style="left:793px;top:61.5px;width:7px;height:5.5px;background:#d4d0c8;border-left:0.6px solid #fff;border-top:0.6px solid #fff;border-right:0.7px solid #888;border-bottom:0.7px solid #888"></div>
<svg class="a" style="left:793px;top:61.5px" width="7" height="6" viewBox="0 0 7 6"><path d="M2,3.6h3l-1.5,-2z" fill="#000"/></svg>
<div class="a" style="left:793px;top:335.8px;width:7px;height:5.5px;background:#d4d0c8;border-left:0.6px solid #fff;border-top:0.6px solid #fff;border-right:0.7px solid #888;border-bottom:0.7px solid #888"></div>
<svg class="a" style="left:793px;top:335.8px" width="7" height="6" viewBox="0 0 7 6"><path d="M2,2h3l-1.5,2z" fill="#000"/></svg>
<div class="a" style="left:716px;top:341.5px;width:77px;height:7.5px;background:#ecebe8"></div>
<div class="a" style="left:721.5px;top:341.5px;width:55px;height:6.5px;background:#d4d0c8;border-left:0.6px solid #fff;border-top:0.6px solid #fff;border-right:0.7px solid #888;border-bottom:0.7px solid #888"></div>
<div class="a" style="left:716px;top:341.5px;width:6px;height:6.5px;background:#d4d0c8;border-left:0.6px solid #fff;border-top:0.6px solid #fff;border-right:0.7px solid #888;border-bottom:0.7px solid #888"></div>
<svg class="a" style="left:716px;top:341.5px" width="6" height="7" viewBox="0 0 6 7"><path d="M3.8,1.8v3l-2,-1.5z" fill="#000"/></svg>
<div class="a" style="left:786.3px;top:341.5px;width:6px;height:6.5px;background:#d4d0c8;border-left:0.6px solid #fff;border-top:0.6px solid #fff;border-right:0.7px solid #888;border-bottom:0.7px solid #888"></div>
<svg class="a" style="left:786.3px;top:341.5px" width="6" height="7" viewBox="0 0 6 7"><path d="M2.2,1.8v3l2,-1.5z" fill="#000"/></svg>
<div class="a" style="left:793px;top:342px;width:7px;height:8px;background:#d4d0c8"></div>

<!-- OUTPUT PANEL -->
<div class="a" style="left:83px;top:350px;width:717px;height:72.5px;background:#d4d0c8"></div>
<div class="a" style="left:84px;top:351.8px;width:716px;height:7.4px;background:#a8a59d"></div>
<div class="t" style="left:86px;top:353.3px;color:#e4e2dc;font-size:4.8px;">Output</div>
<svg class="a" style="left:784px;top:352.5px" width="15" height="6" viewBox="0 0 15 6"><path d="M2,1h3v3h-3zM1.5,4h4M3.5,4v2" stroke="#dcdad4" stroke-width="0.6" fill="none"/><path d="M9.5,1l4,4M13.5,1l-4,4" stroke="#dcdad4" stroke-width="0.8"/></svg>
<div class="a" style="left:84.5px;top:359.2px;width:715.5px;height:63.3px;background:#fff"></div>
<div class="a" style="left:84.5px;top:359.2px;width:715.5px;height:7.3px;background:#d8d5ce"></div>
<svg class="a" style="left:86px;top:359.2px" width="7" height="7" viewBox="0 0 7 7"><rect x="0.8" y="1.5" width="4.6" height="4.6" fill="#fff" stroke="#808080" stroke-width="0.5"/><path d="M1.9,3.8h2.4" stroke="#000" stroke-width="0.6"/></svg>
<div class="t" style="left:94px;top:360.6px;color:#222;font-size:4.8px;">CH1</div>
<div class="a" style="left:84.5px;top:366.5px;width:7.5px;height:7px;background:#d8d5ce"></div>
<div class="t" style="left:94px;top:367.8px;color:#222;font-size:4.8px;">Frequency</div>
<div class="t" style="left:176px;top:367.8px;color:#222;font-size:4.8px;">6.494KHz</div>
<div class="a" style="left:84.5px;top:373.5px;width:715.5px;height:7.3px;background:#d8d5ce"></div>
<svg class="a" style="left:86px;top:373.5px" width="7" height="7" viewBox="0 0 7 7"><rect x="0.8" y="1.5" width="4.6" height="4.6" fill="#fff" stroke="#808080" stroke-width="0.5"/><path d="M1.9,3.8h2.4" stroke="#000" stroke-width="0.6"/></svg>
<div class="t" style="left:94px;top:374.9px;color:#222;font-size:4.8px;">CH2</div>
<div class="a" style="left:84.5px;top:380.8px;width:7.5px;height:7px;background:#d8d5ce"></div>
<div class="t" style="left:94px;top:382.1px;color:#222;font-size:4.8px;">Frequency</div>
<div class="t" style="left:176px;top:382.1px;color:#222;font-size:4.8px;">6.494KHz</div>
<div class="a" style="left:92px;top:387.3px;width:708px;height:0.6px;background:#d8d8d8"></div>
<div class="a" style="left:174.3px;top:366.5px;width:0.6px;height:56px;background:#d8d8d8"></div>
<div class="a" style="left:82.5px;top:350px;width:1.5px;height:72.5px;background:#a8a59d"></div>

<!-- STATUS BAR -->
<div class="a" style="left:0;top:422.5px;width:800px;height:10.5px;background:linear-gradient(to right,#d6d3cc 0%,#e6e4df 35%,#ebeae5 100%);border-top:0.6px solid #c4c2bc"></div>
<div class="t" style="left:2px;top:425.2px;font-size:5px;color:#111">Running...</div>
<div class="t" style="left:756px;top:425.3px;font-family:'Liberation Serif',serif;font-size:5.05px;color:#111">18-03-2014 &nbsp;08:07</div>
</div>
</body></html>
